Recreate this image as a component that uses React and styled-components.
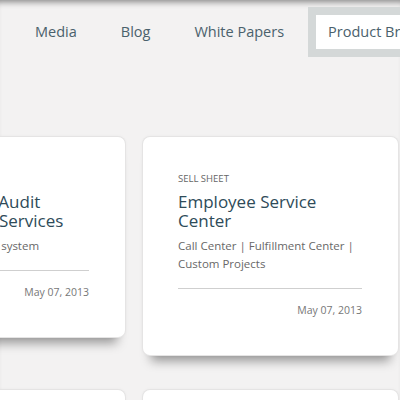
import React from "react";
import styled, { createGlobalStyle } from "styled-components";

const GlobalStyle = createGlobalStyle`
  html, body {
    margin: 0;
    padding: 0;
    background: #f3f2f2;
    overflow: hidden;
  }
  body {
    font-family: "Open Sans", "Noto Sans", sans-serif;
  }
`;

const Page = styled.div`
  width: 400px;
  height: 400px;
  overflow: hidden;
  background: #f3f2f2;
  box-shadow: inset 0 7px 6px -5px rgba(0, 0, 0, 0.45);
`;

const Nav = styled.nav`
  display: flex;
  align-items: flex-start;
  padding: 7px 0 0 13px;
  white-space: nowrap;
`;

const NavItem = styled.a`
  display: block;
  flex-shrink: 0;
  margin: 0 2px;
  padding: 7px 12px;
  border: 8px solid ${props => (props.active ? "#d4d8d8" : "transparent")};
  background: ${props => (props.active ? "#fff" : "transparent")};
  font-size: 14.5px;
  line-height: 20px;
  color: #4a616c;
  text-decoration: none;
`;

const Grid = styled.main`
  display: grid;
  grid-template-columns: repeat(3, 255px);
  column-gap: 18px;
  row-gap: 35px;
  align-items: start;
  margin-left: -130px;
  padding-top: 80px;
`;

const Card = styled.article`
  background: #fff;
  border-radius: 7px;
  padding: 35px 36px 38px 35px;
  box-shadow: 0 0 0 1px #e5e4e4, 0 0 4px rgba(0, 0, 0, 0.05),
    0 14px 10px -8px rgba(0, 0, 0, 0.38);
`;

const Eyebrow = styled.div`
  font-size: 9.5px;
  line-height: 14px;
  text-transform: uppercase;
  color: #666;
`;

const Title = styled.h3`
  margin: 6px 0 0;
  font-size: 17px;
  line-height: 19px;
  font-weight: 400;
  color: #2e4b59;
`;

const Desc = styled.p`
  margin: 7px 0 0;
  font-size: 11.5px;
  line-height: 18px;
  color: #686868;
`;

const Divider = styled.hr`
  margin: 15px 0 0;
  border: 0;
  border-top: 1px solid #cfcfcf;
`;

const Date = styled.div`
  margin-top: 14px;
  text-align: right;
  font-size: 10.5px;
  line-height: 14px;
  color: #777;
`;

const docs = [
  { type: "Sell Sheet", title: "Fixed Asset Audit Verification Services", desc: "Inventory tagging system" },
  { type: "Sell Sheet", title: "Employee Service Center", desc: "Call Center | Fulfillment Center | Custom Projects" },
  { type: "Sell Sheet", title: "Warehouse Solutions", desc: "Storage | Distribution" },
  { type: "White Paper", title: "Records Management", desc: "Secure document storage" },
  { type: "White Paper", title: "Print Services", desc: "On demand printing" },
  { type: "White Paper", title: "Mail Center", desc: "Mailroom services" }
];

const navLinks = ["Media", "Blog", "White Papers", "Product Brochures"];

const App = () => (
  <Page>
    <GlobalStyle />
    <Nav>
      {navLinks.map(link => (
        <NavItem key={link} href="#" active={link === "Product Brochures" ? 1 : 0}>
          {link}
        </NavItem>
      ))}
    </Nav>
    <Grid>
      {docs.map(doc => (
        <Card key={doc.title}>
          <Eyebrow>{doc.type}</Eyebrow>
          <Title>{doc.title}</Title>
          <Desc>{doc.desc}</Desc>
          <Divider />
          <Date>May 07, 2013</Date>
        </Card>
      ))}
    </Grid>
  </Page>
);

export default App;
